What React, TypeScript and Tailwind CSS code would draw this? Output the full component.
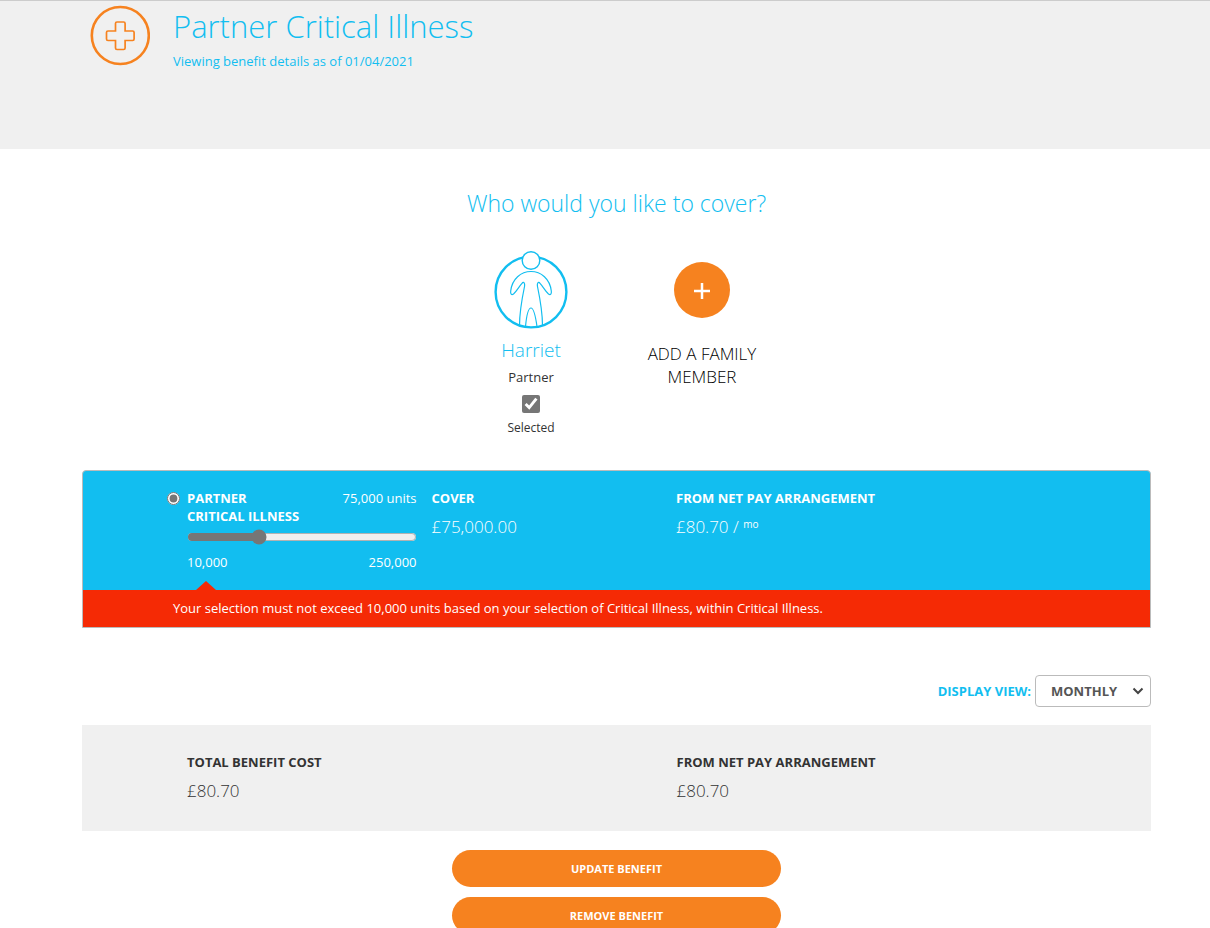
import { useState } from 'react';

const MIN_UNITS = 10000;
const MAX_UNITS = 250000;

function BenefitIcon() {
  return (
    <svg width="60" height="61" viewBox="0 0 60 61" fill="none" stroke="#f6821f" aria-hidden="true">
      <circle cx="30.3" cy="30.5" r="28.5" strokeWidth="2.6" />
      <path
        d="M27 17h6.600a1.500 1.500 0 0 1 1.500 1.500v7.500h7.500a1.500 1.500 0 0 1 1.500 1.500v6.500a1.500 1.500 0 0 1-1.500 1.500h-7.500v7.500a1.500 1.500 0 0 1-1.500 1.500H27a1.500 1.500 0 0 1-1.500-1.500v-7.500h-7.500a1.500 1.500 0 0 1-1.500-1.500v-6.500a1.500 1.500 0 0 1 1.500-1.500h7.500v-7.500a1.500 1.500 0 0 1 1.500-1.500z"
        strokeWidth="1.700"
      />
    </svg>
  );
}

function PersonIcon() {
  return (
    <svg width="74" height="78" viewBox="0 0 74 78" fill="none" stroke="#12bef0" strokeWidth="1.2" aria-hidden="true">
      <circle cx="37" cy="41" r="35.4" strokeWidth="2.4" />
      <circle cx="37" cy="9.5" r="8.8" fill="#fff" strokeWidth="1.4" />
      <path d="M25.500 74.500C25.500 62 27.500 50 30.600 35C31 32 29.800 30.300 28 32.300C25 35.500 23 40 19.500 43C17.500 44.400 16.300 43 16.700 40C18 28 27 20.500 37 20.500C47 20.500 56 28 57.300 40C57.700 43 56.500 44.400 54.500 43C51 40 49 35.500 46 32.300C44.200 30.300 43 32 43.400 35C46.500 50 48.500 62 48.500 74.500" />
      <path d="M31.500 75.500C32.500 65 34.500 57 37 57C39.500 57 41.500 65 43 75.500" />
    </svg>
  );
}

export default function App() {
  const [units, setUnits] = useState(82500);
  const [selected, setSelected] = useState(true);
  const [view, setView] = useState('monthly');

  return (
    <div className="bg-white font-['Open_Sans',sans-serif] text-[13px] leading-[18px] text-[#333]">
      <header className="flex h-[149px] items-start gap-[23px] border-t border-[#ccc] bg-[#f0f0f0] pt-1 pl-[90px]">
        <BenefitIcon />
        <div className="text-[#12bef0]">
          <h1 className="text-[31px] leading-[42px] font-light">Partner Critical Illness</h1>
          <p className="mt-[5px]">Viewing benefit details as of 01/04/2021</p>
        </div>
      </header>

      <main className="pr-[59px] pl-[82px]">
        <h2 className="pt-9 text-center text-[23px] leading-9 font-light text-[#12bef0]">
          Who would you like to cover?
        </h2>

        <div className="mt-[30px] flex justify-center">
          <div className="flex w-[171px] flex-col items-center">
            <PersonIcon />
            <h3 className="mt-2 text-[19px] leading-[26px] font-light text-[#12bef0]">Harriet</h3>
            <p className="mt-[5px]">Partner</p>
            <label className="mt-[9px] flex flex-col items-center text-[12px]">
              <input
                type="checkbox"
                checked={selected}
                onChange={(e) => setSelected(e.target.checked)}
                className="mb-1.5 h-[18px] w-[18px] accent-[#767676]"
              />
              Selected
            </label>
          </div>
          <div className="flex w-[171px] flex-col items-center px-6 pt-[11px]">
            <button
              type="button"
              className="flex flex-col items-center text-[17px] leading-[23px] font-light text-black uppercase"
            >
              <span className="mb-6 flex h-14 w-14 items-center justify-center rounded-full bg-[#f6821f]">
                <svg width="18" height="18" viewBox="0 0 18 18" stroke="#fff" strokeWidth="2.5" aria-hidden="true">
                  <path d="M9 2v16M1 10h16" />
                </svg>
              </span>
              Add a family member
            </button>
          </div>
        </div>

        <section className="mt-[33px] overflow-hidden rounded-t border border-[#bbb] bg-[#12bef0] text-white">
          <div className="grid grid-cols-4 pt-[18px] pb-2.5 pl-[89px]">
            <div className="flex items-start pl-[15px]">
              <input
                type="radio"
                id="plan"
                name="plan"
                defaultChecked
                className="mt-[3px] mr-[7px] -ml-5 h-[13px] w-[13px] shrink-0 accent-[#767676]"
              />
              <div className="grow">
                <div className="flex justify-between">
                  <label htmlFor="plan" className="w-[120px] font-bold uppercase">
                    Partner Critical Illness
                  </label>
                  <span>75,000 units</span>
                </div>
                <input
                  type="range"
                  aria-label="Units of cover"
                  min={MIN_UNITS}
                  max={MAX_UNITS}
                  step={2500}
                  value={units}
                  onChange={(e) => setUnits(Number(e.target.value))}
                  className="mt-1 block h-4 w-full accent-[#767676]"
                />
                <div className="mt-2 flex justify-between">
                  <span>10,000</span>
                  <span>250,000</span>
                </div>
              </div>
            </div>
            <div className="px-[15px]">
              <h4 className="font-bold uppercase">Cover</h4>
              <p className="mt-2 text-[17px] leading-6 font-light">£75,000.00</p>
            </div>
            <div className="col-span-2 px-[15px]">
              <h4 className="font-bold uppercase">From net pay arrangement</h4>
              <p className="mt-2 text-[17px] leading-6 font-light">
                £80.70 / <sup className="text-[10px] font-normal">mo</sup>
              </p>
            </div>
          </div>
          <div className="ml-[113px] h-0 w-0 border-x-10 border-b-9 border-x-transparent border-b-[#f52a05]" />
          <p role="alert" className="bg-[#f52a05] pt-[9px] pb-2.5 pl-[90px]">
            Your selection must not exceed 10,000 units based on your selection of Critical Illness, within Critical
            Illness.
          </p>
        </section>

        <div className="mt-[47px] flex items-center justify-end gap-1 font-bold uppercase">
          <label htmlFor="view" className="text-[#12bef0]">
            Display view:
          </label>
          <div className="relative">
            <select
              id="view"
              value={view}
              onChange={(e) => setView(e.target.value)}
              className="block h-8 w-[116px] appearance-none rounded border border-[#bbb] bg-white pl-[15px] font-bold text-[#555] uppercase"
            >
              <option value="monthly">Monthly</option>
              <option value="annual">Annual</option>
            </select>
            <svg
              width="12"
              height="8"
              viewBox="0 0 12 8"
              fill="none"
              stroke="#444"
              strokeWidth="2"
              className="pointer-events-none absolute top-3 right-[7px]"
              aria-hidden="true"
            >
              <path d="M1.500 1.500L6 6l4.500-4.500" />
            </svg>
          </div>
        </div>

        <section className="mt-[18px] grid grid-cols-2 bg-[#f0f0f0] py-7 pl-[90px]">
          <div className="px-[15px]">
            <h4 className="font-bold uppercase">Total benefit cost</h4>
            <p className="mt-2 text-[17px] leading-6 font-light">£80.70</p>
          </div>
          <div className="px-[15px]">
            <h4 className="font-bold uppercase">From net pay arrangement</h4>
            <p className="mt-2 text-[17px] leading-6 font-light">£80.70</p>
          </div>
        </section>

        <div className="mx-auto mt-[19px] flex max-w-[329px] flex-col gap-2.5 text-[11px]">
          <button type="button" className="h-[37px] rounded-full bg-[#f6821f] font-bold text-white uppercase">
            Update benefit
          </button>
          <button type="button" className="h-[37px] rounded-full bg-[#f6821f] font-bold text-white uppercase">
            Remove benefit
          </button>
        </div>
      </main>
    </div>
  );
}
